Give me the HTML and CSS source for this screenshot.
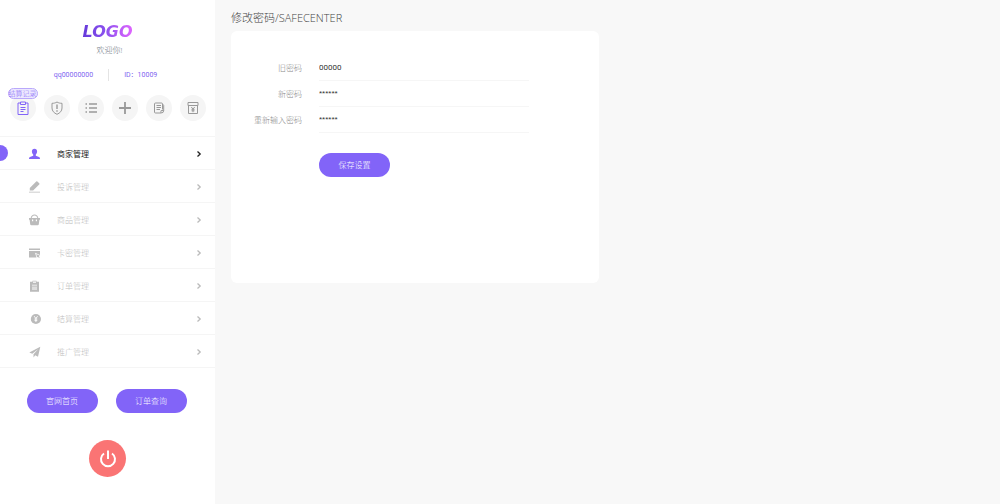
FILE: index.html
```html
<!DOCTYPE html>
<html lang="zh-CN">
<head>
    <meta charset="UTF-8" />
    <meta name="viewport" content="width=device-width, initial-scale=1">
    <title>修改密码</title>
    <link rel="stylesheet" href="styles.css">
</head>
<body>
    <div class="layout">
        <aside class="sidebar">
            <div class="logo">LOGO</div>
            <p class="welcome">欢迎你!</p>
            <div class="account">
                <span class="account-name">qq00000000</span>
                <span class="account-id">ID：10009</span>
            </div>

            <div class="tools">
                <button class="tool active" type="button" aria-label="结算记录">
                    <svg viewBox="0 0 26 26"><path d="M10.500 8H8v11.500h10V8h-2.500M10.500 7h5v2.500h-5zM10.500 12.500h5M10.500 14.500h5M10.500 16.500h3" /></svg>
                    <span class="tool-tip">结算记录</span>
                </button>
                <button class="tool" type="button" aria-label="安全">
                    <svg viewBox="0 0 26 26"><path d="M13 7c-1.600 1-3.200 1.300-5 1.300V13c0 3 2 5 5 6.300 3-1.300 5-3.300 5-6.300V8.300C16.200 8.300 14.600 8 13 7z" /><path d="M13 9.500v4.500M13 15.200v1.500" stroke-width="1.400" /></svg>
                </button>
                <button class="tool" type="button" aria-label="列表">
                    <svg viewBox="0 0 26 26"><path d="M7.500 9H9M11 9h8M7.500 13H9M11 13h8M7.500 17H9M11 17h8" stroke-width="1.400" /></svg>
                </button>
                <button class="tool" type="button" aria-label="添加">
                    <svg viewBox="0 0 26 26"><path d="M13 7v12M7 13h12" stroke-width="1.800" /></svg>
                </button>
                <button class="tool" type="button" aria-label="文章">
                    <svg viewBox="0 0 26 26"><path d="M16.500 14.500V9q0-1-1-1h-6q-1 0-1 1v8q0 1 1 1H15M16.500 9.500q1.200 0 1.200 1v5q0 2.500-2.500 2.500-.7-1 0-2.500h2.500M10.500 10.500h4.500M10.500 12.500h4.500M10.500 14.500h3.500" /></svg>
                </button>
                <button class="tool" type="button" aria-label="提现">
                    <svg viewBox="0 0 26 26"><path d="M8 7.500h10v3H8zM8.500 10.500v8h9v-8M11.300 12l1.700 2 1.700-2M13 14v3.200M11.500 14.300h3M11.500 15.800h3" /></svg>
                </button>
            </div>

            <nav class="menu">
                <a class="menu-item active" href="#">
                    <svg class="menu-icon" viewBox="0 0 12 12"><path d="M6 .7c1.700 0 2.700 1.200 2.600 2.900C8.500 5 8 6 7.300 6.600v1.200l3.200 1.100c.7.300 1 .9 1 2.100H.5c0-1.200.3-1.800 1-2.100l3.200-1.100V6.600C4 6 3.500 5 3.400 3.600 3.300 1.900 4.300.7 6 .7z" /></svg>
                    <span class="menu-text">商家管理</span>
                    <svg class="arrow" viewBox="0 0 6 6"><path d="M1.500.5 4.200 3 1.500 5.500" /></svg>
                </a>
                <a class="menu-item" href="#">
                    <svg class="menu-icon" viewBox="0 0 12 12"><path d="M7.700.4Q8.300-.1 8.900.5l1.800 1.800q.6.600 0 1.200L4.600 9.600H1.300V6.900zM.5 10.700h11v.9H.5z" /></svg>
                    <span class="menu-text">投诉管理</span>
                    <svg class="arrow" viewBox="0 0 6 6"><path d="M1.500.5 4.200 3 1.500 5.500" /></svg>
                </a>
                <a class="menu-item" href="#">
                    <svg class="menu-icon" viewBox="0 0 12 12"><path fill-rule="evenodd" d="M.5 4h1.700C2.500 1.800 4 .4 6 .4S9.500 1.800 9.800 4h1.700v1.800h-.6l-.6 4.500c-.1.700-.5 1-1.200 1H2.900c-.7 0-1.100-.3-1.200-1l-.6-4.500H.5zM3.200 4h5.600C8.500 2.400 7.500 1.400 6 1.400S3.500 2.400 3.200 4zM3.500 5.500v1.700h1.200V5.500zM7.300 5.500v1.700h1.200V5.500z" /></svg>
                    <span class="menu-text">商品管理</span>
                    <svg class="arrow" viewBox="0 0 6 6"><path d="M1.500.5 4.200 3 1.500 5.500" /></svg>
                </a>
                <a class="menu-item" href="#">
                    <svg class="menu-icon" viewBox="0 0 12 12"><path d="M.5 1.500h11v1.600H.5zM.5 4h11v4L6.500 5.800 8 10.500H.5zM7.700 7l3.800 1.700-1.300.5 1.300 1.300H10l-.8-.8-.5.800z" /></svg>
                    <span class="menu-text">卡密管理</span>
                    <svg class="arrow" viewBox="0 0 6 6"><path d="M1.500.5 4.200 3 1.500 5.500" /></svg>
                </a>
                <a class="menu-item" href="#">
                    <svg class="menu-icon" viewBox="0 0 12 12"><path fill-rule="evenodd" d="M1.500 1.800H4V.7h4v1.100h2.500v9.900h-9zM4.500 1.500v1.300h3V1.500zM3.500 4.800v.8h5v-.8zM3.500 6.700v.8h5v-.8zM3.500 8.600v.8h5v-.8z" /></svg>
                    <span class="menu-text">订单管理</span>
                    <svg class="arrow" viewBox="0 0 6 6"><path d="M1.500.5 4.200 3 1.500 5.500" /></svg>
                </a>
                <a class="menu-item" href="#">
                    <svg class="menu-icon" viewBox="0 0 14 12"><circle cx="8.500" cy="6" r="5.500" /><path class="cut" d="M6.700 3l1.800 2.500L10.300 3M8.500 5.500v3.800M7 6h3M7 7.500h3" /></svg>
                    <span class="menu-text">结算管理</span>
                    <svg class="arrow" viewBox="0 0 6 6"><path d="M1.500.5 4.200 3 1.500 5.500" /></svg>
                </a>
                <a class="menu-item" href="#">
                    <svg class="menu-icon" viewBox="0 0 12 12"><path d="M11.800.8.800 6.500l3 1.200L9.800 3 5 8.300v3.200l1.700-2.300 2.800 1.500z" /></svg>
                    <span class="menu-text">推广管理</span>
                    <svg class="arrow" viewBox="0 0 6 6"><path d="M1.500.5 4.200 3 1.500 5.500" /></svg>
                </a>
            </nav>

            <div class="links">
                <button class="btn" type="button">官网首页</button>
                <button class="btn" type="button">订单查询</button>
            </div>
            <button class="power" type="button" aria-label="退出">
                <svg viewBox="0 0 18 18"><path d="M5 3.500a7 7 0 1 0 8 0M9 .500v8.500" /></svg>
            </button>
        </aside>

        <main class="content">
            <h1 class="title">修改密码/SAFECENTER</h1>
            <form class="card">
                <div class="field">
                    <label for="old">旧密码</label>
                    <input id="old" type="text" value="00000">
                </div>
                <div class="field">
                    <label for="new">新密码</label>
                    <input id="new" class="masked" type="text" value="******">
                </div>
                <div class="field">
                    <label for="again">重新输入密码</label>
                    <input id="again" class="masked" type="text" value="******">
                </div>
                <button class="btn save" type="button">保存设置</button>
            </form>
        </main>
    </div>
</body>
</html>
```
FILE: styles.css
```css
* {
    box-sizing: border-box;
}

body {
    margin: 0;
    background: #f8f8f8;
    font-family: "Open Sans", "Noto Sans CJK SC", sans-serif;
    font-size: 8px;
    font-weight: 300;
    line-height: 12px;
}

button,
input {
    padding: 0;
    border: 0;
    font: inherit;
}

button {
    cursor: pointer;
}

svg {
    display: block;
}

.layout {
    display: flex;
    min-height: 100vh;
}

/* sidebar */
.sidebar {
    display: flex;
    flex-direction: column;
    flex: 0 0 215px;
    align-items: center;
    padding-top: 22px;
    background: #fff;
}

.logo {
    padding: 0 2px;
    background: linear-gradient(90deg, #6238d8, #8a50ee 45%, #e466ff);
    -webkit-background-clip: text;
    background-clip: text;
    color: transparent;
    font: italic bold 16px/20px "DejaVu Sans", sans-serif;
}

.welcome {
    margin: 2px 0 0;
    padding-left: 4px;
    color: #6b7580;
}

.account {
    display: flex;
    align-items: center;
    margin-top: 13px;
    padding-right: 4px;
    color: #8063f0;
    font-family: Roboto, "Noto Sans CJK SC", sans-serif;
    font-size: 7px;
    font-weight: 400;
}

.account-name {
    padding-right: 15px;
    border-right: 1px solid #e4e4e4;
}

.account-id {
    padding-left: 15px;
}

.tools {
    display: flex;
    gap: 8px;
    margin-top: 14px;
}

.tool {
    position: relative;
    width: 26px;
    height: 26px;
    border-radius: 50%;
    background: #f5f5f5;
    color: #999;
}

.tool svg {
    width: 26px;
    height: 26px;
    fill: none;
    stroke: currentColor;
}

.tool.active {
    color: #8264f8;
}

.tool-tip {
    position: absolute;
    top: -7px;
    left: -2px;
    width: 30px;
    border: 1px solid #b9a8fb;
    border-radius: 6px;
    background: #ece8fe;
    font-size: 7px;
    line-height: 9px;
    white-space: nowrap;
}

.menu {
    align-self: stretch;
    margin-top: 15px;
    border-top: 1px solid #f5f5f5;
}

.menu-item {
    position: relative;
    display: flex;
    align-items: center;
    height: 33px;
    padding: 1px 13px 0 28px;
    border-bottom: 1px solid #f5f5f5;
    color: #bbb;
    text-decoration: none;
}

.menu-icon {
    width: 13px;
    height: 12px;
    margin-right: 16px;
    fill: currentColor;
}

.menu-icon .cut {
    fill: none;
    stroke: #fff;
}

.menu-text {
    flex: 1;
}

.arrow {
    width: 6px;
    height: 6px;
    fill: none;
    stroke: currentColor;
    stroke-width: 1.3;
}

.menu-item.active {
    color: #222;
    font-weight: 400;
}

.menu-item.active .menu-icon {
    color: #8264f8;
}

.menu-item.active::before {
    content: "";
    position: absolute;
    top: 8px;
    left: 0;
    width: 8px;
    height: 16px;
    border-radius: 0 8px 8px 0;
    background: #8264f8;
}

.links {
    display: flex;
    gap: 18px;
    margin-top: 21px;
    padding-right: 2px;
}

.btn {
    width: 71px;
    height: 24px;
    border-radius: 12px;
    background: #8264f8;
    color: #fff;
}

.power {
    display: flex;
    align-items: center;
    justify-content: center;
    width: 37px;
    height: 37px;
    margin-top: 27px;
    border-radius: 50%;
    background: #fa7474;
}

.power svg {
    width: 18px;
    height: 18px;
    fill: none;
    stroke: #fff;
    stroke-width: 2;
}

/* password form */
.content {
    flex: 1;
    padding: 10px 16px;
}

.title {
    margin: 0 0 5px;
    color: #444;
    font-size: 11px;
    font-weight: 300;
    line-height: 16px;
}

.card {
    max-width: 368px;
    padding: 24px 70px 106px 15px;
    border-radius: 6px;
    background: #fff;
}

.field {
    display: flex;
    align-items: center;
}

.field label {
    width: 56px;
    margin-right: 17px;
    color: #888;
    text-align: right;
}

.field input {
    flex: 1;
    min-width: 0;
    height: 26px;
    border-bottom: 1px solid #f6f6f6;
    background: none;
    color: #333;
    font-family: Roboto, sans-serif;
    font-weight: 400;
    outline: none;
}

.field .masked {
    font-family: "Liberation Sans", sans-serif;
}

.save {
    display: block;
    margin: 20px 0 0 73px;
}
```
